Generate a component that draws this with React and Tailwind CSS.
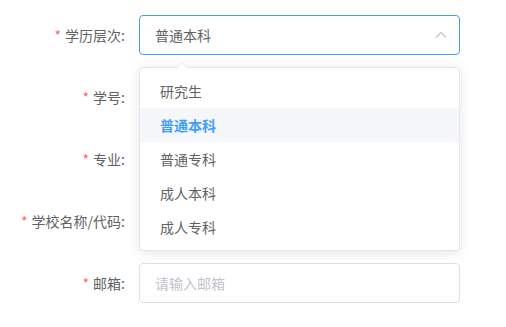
import React from "react";

const font = { fontFamily: '"Noto Sans CJK SC", "Noto Sans", sans-serif' };

function Label({ text }) {
  return (
    <label className="w-[139px] shrink-0 pr-[14px] text-right text-[14px] leading-[40px] text-[#606266]">
      <span className="mr-1 text-[#F56C6C]">*</span>
      {text}:
    </label>
  );
}

function Row({ label, children }) {
  return (
    <div className="mb-[22px] flex h-[40px] items-center">
      <Label text={label} />
      <div className="w-[321px]">{children}</div>
    </div>
  );
}

export default function App() {
  const options = ["研究生", "普通本科", "普通专科", "成人本科", "成人专科"];
  const selected = "普通本科";

  return (
    <div className="relative h-[327px] w-[506px] overflow-hidden bg-white" style={font}>
      <div className="pt-[15px]">
        <Row label="学历层次">
          <div className="flex h-[40px] items-center justify-between rounded-[4px] border border-[#409EFF] px-[15px] text-[14px] text-[#606266]">
            <span>普通本科</span>
            <svg width="12" height="12" viewBox="0 0 12 12" className="mr-[-3px]">
              <path d="M1 8.5 L6 3.5 L11 8.5" fill="none" stroke="#C0C4CC" strokeWidth="1.2" />
            </svg>
          </div>
        </Row>
        <Row label="学号">
          <div className="h-[40px]" />
        </Row>
        <Row label="专业">
          <div className="h-[40px]" />
        </Row>
        <Row label="学校名称/代码">
          <div className="h-[40px]" />
        </Row>
        <Row label="邮箱">
          <div className="flex h-[40px] items-center rounded-[4px] border border-[#DCDFE6] px-[15px] text-[14px] text-[#C0C4CC]">
            请输入邮箱
          </div>
        </Row>
      </div>

      {/* dropdown */}
      <div className="absolute left-[139px] top-[67px] w-[321px] rounded-[4px] border border-[#E4E7ED] bg-white py-[6px] shadow-[0_2px_12px_0_rgba(0,0,0,0.1)]">
        <div className="absolute -top-[6px] left-[36px] h-0 w-0 border-x-[6px] border-b-[6px] border-x-transparent border-b-[#E4E7ED]" />
        <div className="absolute -top-[5px] left-[37px] h-0 w-0 border-x-[5px] border-b-[5px] border-x-transparent border-b-white" />
        {options.map((o) => (
          <div
            key={o}
            className={
              o === selected
                ? "h-[34px] bg-[#F5F7FA] px-5 text-[14px] font-bold leading-[34px] text-[#409EFF]"
                : "h-[34px] px-5 text-[14px] leading-[34px] text-[#606266]"
            }
          >
            {o}
          </div>
        ))}
      </div>
    </div>
  );
}
